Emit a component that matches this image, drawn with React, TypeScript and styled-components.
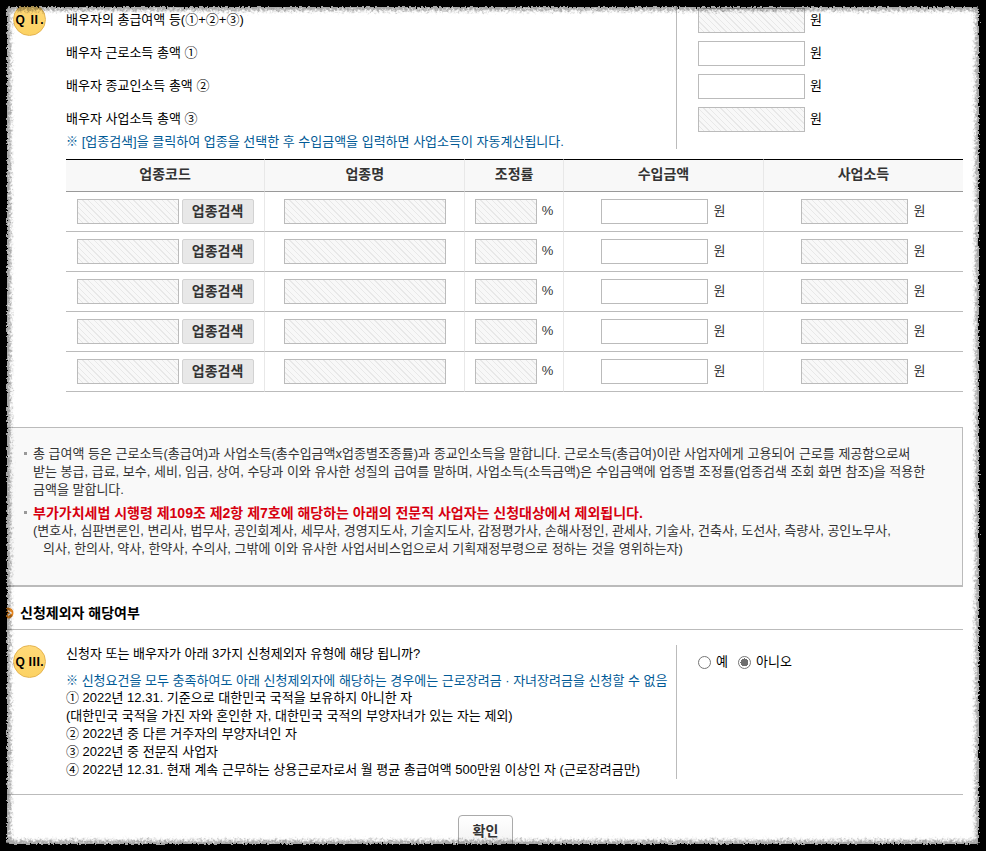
import React from "react";
import styled, { createGlobalStyle, css } from "styled-components";

const GlobalStyle = createGlobalStyle`
  * { box-sizing: border-box; }
  body {
    margin: 0;
    background: #fff;
    color: #000;
    font: 13px/18px "Liberation Sans", "Noto Sans CJK KR", sans-serif;
  }
  input, button { font: inherit; }
`;

const Page = styled.main`
  padding: 4px 23px 4px 0;
  word-break: keep-all;
`;

const Question = styled.section`
  display: grid;
  grid-template-columns: 66px minmax(0, 611fr) minmax(0, 286fr);
`;

const BadgeCell = styled.div<{ $raised?: boolean }>`
  padding-left: 13px;
  margin-top: ${(p) => (p.$raised ? "-1px" : "0")};
`;

const Badge = styled.span`
  display: flex;
  align-items: center;
  justify-content: center;
  width: 33px;
  height: 33px;
  border: 1px solid #e5b450;
  border-radius: 50%;
  background: linear-gradient(#ffd978, #fcd263);
  font-size: 12px;
  font-weight: bold;
  white-space: nowrap;
`;

const Labels = styled.div`
  border-right: 1px solid #bbb;
`;

const rowHeight = css`
  display: flex;
  align-items: center;
  height: 33px;
`;

const RowLabel = styled.label`
  ${rowHeight}
  padding-bottom: 2px;
`;

const Fields = styled.div`
  padding-left: 21px;
`;

const FieldRow = styled.div`
  ${rowHeight}
  gap: 5px;
`;

const Unit = styled.span`
  padding-bottom: 2px;
`;

const Note = styled.p<{ $compact?: boolean }>`
  margin: 0;
  color: #005a96;
  line-height: ${(p) => (p.$compact ? "12px" : "16px")};
  padding-bottom: ${(p) => (p.$compact ? "1px" : "0")};
  white-space: nowrap;
`;

const Mark = styled.span`
  font-size: 12px;
  font-weight: 300;
`;

const TextField = styled.input<{ $width: number }>`
  width: ${(p) => p.$width}px;
  height: 25px;
  padding: 0 4px;
  border: 1px solid #bbb;
  border-radius: 0;
  background: #fff;
  text-align: right;
  &:read-only {
    background: repeating-linear-gradient(45deg, #f8f8f8 0 3px, #e8e8e8 3px 4px);
  }
`;

const IncomeTable = styled.table`
  width: calc(100% - 66px);
  margin: 10px 0 0 66px;
  border-collapse: separate;
  border-spacing: 0;
  table-layout: fixed;
  color: #333;
`;

const HeadCell = styled.th`
  height: 33px;
  padding: 0 0 3px;
  border-top: 1px solid #000;
  border-bottom: 1px solid #999;
  background: #f8f8f8;
  font-size: 14px;
  & + & { border-left: 1px solid #e8e8e8; }
`;

const Cell = styled.td`
  height: 40px;
  padding: 0;
  border-bottom: 1px solid #bbb;
  & + & { border-left: 1px solid #e8e8e8; }
`;

const CellContent = styled.div<{ $gap?: number }>`
  display: flex;
  align-items: center;
  justify-content: center;
  gap: ${(p) => p.$gap ?? 5}px;
`;

const SearchButton = styled.button`
  width: 72px;
  height: 25px;
  padding: 0 0 1px;
  border: 1px solid #d2d2d2;
  border-radius: 2px;
  background: #e8e8e8;
  color: #333;
  font-size: 14px;
  font-weight: bold;
`;

const Notice = styled.section`
  margin-top: 35px;
  padding: 17px 20px 27px 24px;
  border: 1px solid #bbb;
  border-width: 1px 1px 2px 0;
  background: #f9f9f9;
  color: #333;
`;

const NoticeList = styled.ul`
  display: grid;
  gap: 5px;
  margin: 0;
  padding: 0;
  list-style: none;
`;

const NoticeItem = styled.li`
  display: flex;
  gap: 6px;
  &::before {
    content: "";
    flex: none;
    width: 3px;
    height: 3px;
    margin-top: 7px;
    background: #999;
  }
`;

const Line = styled.span<{ $indent?: boolean }>`
  display: block;
  padding-left: ${(p) => (p.$indent ? "10px" : "0")};
  white-space: nowrap;
`;

const Warning = styled.strong`
  display: block;
  color: #d7000f;
  font-size: 14px;
  white-space: nowrap;
`;

const SectionTitle = styled.h2`
  display: flex;
  align-items: center;
  gap: 6px;
  height: 43px;
  margin: 0 0 15px;
  padding: 10px 0 0 4px;
  border-bottom: 1px solid #bbb;
  font-size: 14px;
`;

const Prompt = styled.p`
  margin: 0 0 10px;
`;

const Choices = styled.div`
  display: flex;
  gap: 10px;
  padding: 8px 0 0 21px;
`;

const Choice = styled.label`
  display: flex;
  align-items: center;
  gap: 5px;
  height: 18px;
`;

const Radio = styled.input`
  appearance: none;
  width: 13px;
  height: 13px;
  margin: 0;
  border: 1px solid #767676;
  border-radius: 50%;
  background: #fff;
  &:checked {
    background: radial-gradient(circle, #6e6e6e 0 4px, #fff 4px);
  }
`;

const Footer = styled.footer`
  display: flex;
  justify-content: center;
  margin-top: 15px;
  padding: 20px 0 0 8px;
  border-top: 1px solid #bbb;
`;

const ConfirmButton = styled.button`
  width: 55px;
  height: 32px;
  border: 1px solid #aaa;
  border-radius: 4px;
  background: linear-gradient(#fff, #f2f2f2);
  color: #333;
  padding: 0;
  font-size: 14px;
  font-weight: bold;
`;

const Edge = styled.svg`
  position: fixed;
  inset: 0;
  width: 100%;
  height: 100%;
  pointer-events: none;
`;

/* Torn black border around the whole window. */
const TornEdge = () => (
  <Edge aria-hidden="true">
    <defs>
      <filter id="torn-soft" x="0" y="0" width="100%" height="100%">
        <feTurbulence type="fractalNoise" baseFrequency="0.4" numOctaves="2" seed="4" result="n" />
        <feGaussianBlur in="SourceGraphic" stdDeviation="1.5" result="b" />
        <feDisplacementMap in="b" in2="n" scale="8" xChannelSelector="R" yChannelSelector="G" />
      </filter>
      <filter id="torn-hard" x="0" y="0" width="100%" height="100%">
        <feTurbulence type="fractalNoise" baseFrequency="0.5" numOctaves="2" seed="9" result="n" />
        <feGaussianBlur in="SourceGraphic" stdDeviation="0.6" result="b" />
        <feDisplacementMap in="b" in2="n" scale="5" xChannelSelector="R" yChannelSelector="G" />
      </filter>
    </defs>
    <g fill="none" stroke="#000">
      <rect width="100%" height="100%" rx="14" strokeWidth="21" strokeOpacity="0.35" filter="url(#torn-soft)" />
      <rect width="100%" height="100%" rx="10" strokeWidth="14" filter="url(#torn-hard)" />
      <rect width="100%" height="100%" strokeWidth="10" />
    </g>
  </Edge>
);

const TitleIcon = () => (
  <svg width="10" height="12" viewBox="0 0 10 12" aria-hidden="true">
    <circle cx="4" cy="6" r="5.5" fill="#e8871e" />
    <path d="M4 3.5 7 6 4 8.5" fill="none" stroke="#fff" strokeWidth="1.5" />
  </svg>
);

const spouseRows = [
  { id: "total", label: "배우자의 총급여액 등(①+②+③)", readOnly: true },
  { id: "wage", label: "배우자 근로소득 총액 ①", readOnly: false },
  { id: "clergy", label: "배우자 종교인소득 총액 ②", readOnly: false },
  { id: "business", label: "배우자 사업소득 총액 ③", readOnly: true },
];

export default function App() {
  return (
    <>
      <GlobalStyle />
      <Page>
        <Question>
          <BadgeCell $raised><Badge>Q Ⅱ.</Badge></BadgeCell>
          <Labels>
            {spouseRows.map((r) => (
              <RowLabel key={r.id} htmlFor={r.id}>{r.label}</RowLabel>
            ))}
            <Note $compact>
              <Mark>※</Mark> [업종검색]을 클릭하여 업종을 선택한 후 수입금액을 입력하면 사업소득이 자동계산됩니다.
            </Note>
          </Labels>
          <Fields>
            {spouseRows.map((r) => (
              <FieldRow key={r.id}>
                <TextField id={r.id} $width={107} readOnly={r.readOnly} />
                <Unit>원</Unit>
              </FieldRow>
            ))}
          </Fields>
        </Question>

        <IncomeTable>
          <colgroup>
            <col width="22.1%" />
            <col width="22.3%" />
            <col width="11%" />
            <col width="22.3%" />
            <col />
          </colgroup>
          <thead>
            <tr>
              {["업종코드", "업종명", "조정률", "수입금액", "사업소득"].map((h) => (
                <HeadCell key={h} scope="col">{h}</HeadCell>
              ))}
            </tr>
          </thead>
          <tbody>
            {[1, 2, 3, 4, 5].map((n) => (
              <tr key={n}>
                <Cell>
                  <CellContent $gap={3}>
                    <TextField $width={102} readOnly aria-label={`업종코드 ${n}`} />
                    <SearchButton type="button">업종검색</SearchButton>
                  </CellContent>
                </Cell>
                <Cell>
                  <CellContent><TextField $width={162} readOnly aria-label={`업종명 ${n}`} /></CellContent>
                </Cell>
                <Cell>
                  <CellContent>
                    <TextField $width={62} readOnly aria-label={`조정률 ${n}`} />
                    <Unit>%</Unit>
                  </CellContent>
                </Cell>
                <Cell>
                  <CellContent>
                    <TextField $width={107} aria-label={`수입금액 ${n}`} />
                    <Unit>원</Unit>
                  </CellContent>
                </Cell>
                <Cell>
                  <CellContent>
                    <TextField $width={107} readOnly aria-label={`사업소득 ${n}`} />
                    <Unit>원</Unit>
                  </CellContent>
                </Cell>
              </tr>
            ))}
          </tbody>
        </IncomeTable>

        <Notice>
          <NoticeList>
            <NoticeItem>
              <div>
                <Line>총 급여액 등은 근로소득(총급여)과 사업소득(총수입금액x업종별조종률)과 종교인소득을 말합니다. 근로소득(총급여)이란 사업자에게 고용되어 근로를 제공함으로써</Line>
                <Line>받는 봉급, 급료, 보수, 세비, 임금, 상여, 수당과 이와 유사한 성질의 급여를 말하며, 사업소득(소득금액)은 수입금액에 업종별 조정률(업종검색 조회 화면 참조)을 적용한</Line>
                <Line>금액을 말합니다.</Line>
              </div>
            </NoticeItem>
            <NoticeItem>
              <div>
                <Warning>부가가치세법 시행령 제109조 제2항 제7호에 해당하는 아래의 전문직 사업자는 신청대상에서 제외됩니다.</Warning>
                <Line>(변호사, 심판변론인, 변리사, 법무사, 공인회계사, 세무사, 경영지도사, 기술지도사, 감정평가사, 손해사정인, 관세사, 기술사, 건축사, 도선사, 측량사, 공인노무사,</Line>
                <Line $indent>의사, 한의사, 약사, 한약사, 수의사, 그밖에 이와 유사한 사업서비스업으로서 기획재정부령으로 정하는 것을 영위하는자)</Line>
              </div>
            </NoticeItem>
          </NoticeList>
        </Notice>

        <SectionTitle><TitleIcon />신청제외자 해당여부</SectionTitle>

        <Question>
          <BadgeCell><Badge>Q Ⅲ.</Badge></BadgeCell>
          <Labels>
            <Prompt>신청자 또는 배우자가 아래 3가지 신청제외자 유형에 해당 됩니까?</Prompt>
            <Note>
              <Mark>※</Mark> 신청요건을 모두 충족하여도 아래 신청제외자에 해당하는 경우에는 근로장려금 · 자녀장려금을 신청할 수 없음
            </Note>
            <Line>① 2022년 12.31. 기준으로 대한민국 국적을 보유하지 아니한 자</Line>
            <Line>(대한민국 국적을 가진 자와 혼인한 자, 대한민국 국적의 부양자녀가 있는 자는 제외)</Line>
            <Line>② 2022년 중 다른 거주자의 부양자녀인 자</Line>
            <Line>③ 2022년 중 전문직 사업자</Line>
            <Line>④ 2022년 12.31. 현재 계속 근무하는 상용근로자로서 월 평균 총급여액 500만원 이상인 자 (근로장려금만)</Line>
          </Labels>
          <Choices role="radiogroup" aria-label="신청제외자 해당여부">
            <Choice><Radio type="radio" name="excluded" value="yes" />예</Choice>
            <Choice><Radio type="radio" name="excluded" value="no" defaultChecked />아니오</Choice>
          </Choices>
        </Question>

        <Footer><ConfirmButton type="button">확인</ConfirmButton></Footer>
      </Page>
      <TornEdge />
    </>
  );
}
